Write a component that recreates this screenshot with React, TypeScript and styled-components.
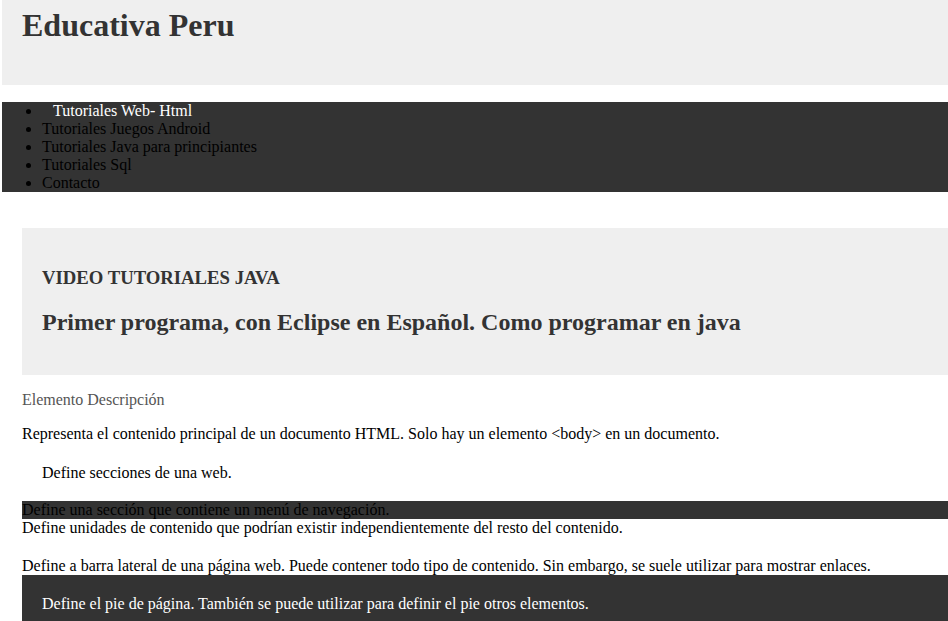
import React from "react";
import styled, { createGlobalStyle } from "styled-components";

const Global = createGlobalStyle`
  html, body { margin: 0; padding: 0; background: #fff; }
  body { font-family: "Liberation Serif", "Times New Roman", serif; font-size: 16px; color: #000; }
`;

const Page = styled.div`
  width: 948px;
  overflow: hidden;
  padding-left: 2px;
  box-sizing: border-box;
`;

const Header = styled.header`
  background: #efefef;
  height: 85px;
  box-sizing: border-box;
  padding: 7px 20px 0;
`;

const Title = styled.h1`
  margin: 0;
  font-size: 32px;
  line-height: 37px;
  font-weight: bold;
  color: #333;
`;

const Nav = styled.nav`
  margin-top: 17px;
  background: #333;
`;

const NavList = styled.ul`
  margin: 0;
  padding: 0 0 0 40px;
`;

const NavItem = styled.li`
  line-height: 18px;
  color: #000;
`;

const ActiveLink = styled.span`
  color: #fff;
  padding-left: 11px;
`;

const Main = styled.main`
  margin-left: 20px;
  padding-top: 36px;
`;

const Banner = styled.section`
  background: #efefef;
  padding: 20px;
`;

const Kicker = styled.h3`
  margin: 19px 0 0;
  font-size: 18.72px;
  line-height: 22px;
  color: #333;
`;

const Headline = styled.h2`
  margin: 19px 0 19px;
  font-size: 24px;
  line-height: 28px;
  color: #333;
`;

const Caption = styled.p`
  margin: 16px 0 0;
  line-height: 18px;
  color: #555;
`;

const Text = styled.p<{ $gap?: number }>`
  margin: ${(p) => p.$gap ?? 0}px 0 0;
  line-height: 18px;
`;

const Indented = styled.div`
  padding: 21px 20px 19px;
  line-height: 18px;
`;

const DarkRow = styled.div`
  background: #333;
  line-height: 18px;
  color: #000;
`;

const Footer = styled.footer`
  background: #333;
  color: #fff;
  padding: 20px;
  line-height: 18px;
`;

const navItems = [
  "Tutoriales Juegos Android",
  "Tutoriales Java para principiantes",
  "Tutoriales Sql",
  "Contacto",
];

export default function App() {
  return (
    <>
      <Global />
      <Page>
        <Header>
          <Title>Educativa Peru</Title>
        </Header>
        <Nav>
          <NavList>
            <NavItem>
              <ActiveLink>Tutoriales Web- Html</ActiveLink>
            </NavItem>
            {navItems.map((t) => (
              <NavItem key={t}>{t}</NavItem>
            ))}
          </NavList>
        </Nav>
        <Main>
          <Banner>
            <Kicker>VIDEO TUTORIALES JAVA</Kicker>
            <Headline>Primer programa, con Eclipse en Español. Como programar en java</Headline>
          </Banner>
          <Caption>Elemento Descripción</Caption>
          <Text $gap={16}>
            Representa el contenido principal de un documento HTML. Solo hay un elemento &lt;body&gt; en un documento.
          </Text>
          <Indented>Define secciones de una web.</Indented>
          <DarkRow>Define una sección que contiene un menú de navegación.</DarkRow>
          <Text>Define unidades de contenido que podrían existir independientemente del resto del contenido.</Text>
          <Text $gap={20}>
            Define a barra lateral de una página web. Puede contener todo tipo de contenido. Sin embargo, se suele utilizar para mostrar enlaces.
          </Text>
          <Footer>Define el pie de página. También se puede utilizar para definir el pie otros elementos.</Footer>
        </Main>
      </Page>
    </>
  );
}
